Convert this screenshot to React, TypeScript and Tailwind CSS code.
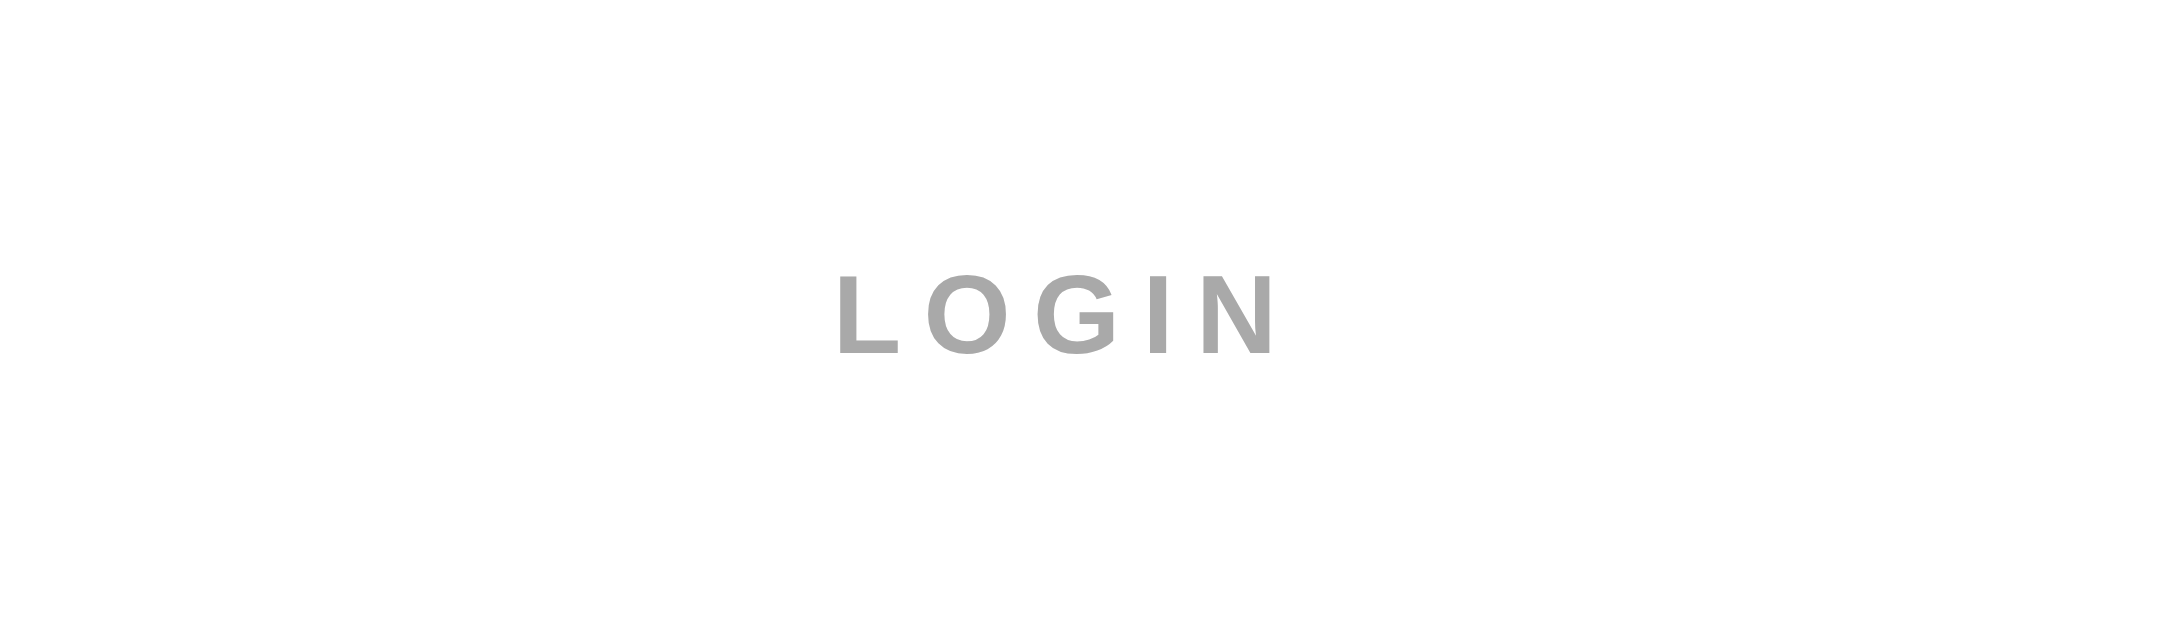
export default function App() {
  return (
    <div className="flex h-screen w-full items-center justify-center bg-white pr-[37px]">
      <h1
        className="text-[112px] font-bold leading-normal tracking-[0.2em] text-[#a9a9a9]"
        style={{ fontFamily: '"Liberation Sans", Arial, sans-serif' }}
      >
        LOGIN
      </h1>
    </div>
  );
}
